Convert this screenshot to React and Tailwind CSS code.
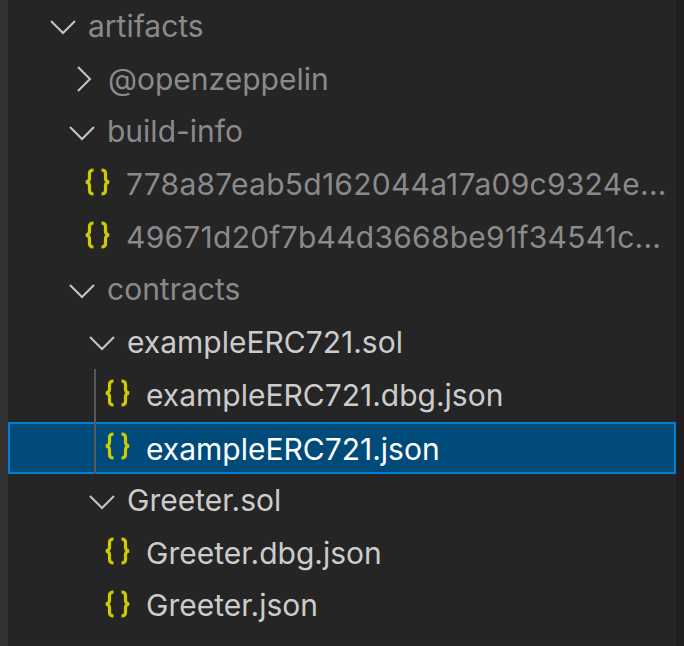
const Chevron = ({ open }) => (
  <svg width="32" height="32" viewBox="0 0 32 32" fill="none" stroke="#c5c5c5" strokeWidth="2" className="shrink-0">
    {open ? <path d="M4 11l12 12 12-12" /> : <path d="M11 4l12 12-12 12" />}
  </svg>
);

const JsonIcon = () => (
  <svg width="28" height="28" viewBox="0 0 28 28" fill="none" stroke="#cccc00" strokeWidth="3.2" className="shrink-0 -translate-y-[2px]">
    <path d="M11.500 2c-3 0-4 1-4 3.500v5c0 2-1 3-3.500 3.500 2.500.5 3.500 1.500 3.500 3.500v5c0 2.500 1 3.500 4 3.500" />
    <path d="M19.500 2c3 0 4 1 4 3.500v5c0 2 1 3 3.500 3.500-2.500.5-3.500 1.500-3.500 3.500v5c0 2.500-1 3.500-4 3.500" />
  </svg>
);

const Row = ({ pad, label, kind, dim, selected }) => (
  <div
    className={`flex h-[52.7px] items-center whitespace-nowrap border-2 ${
      selected ? 'border-[#007fd4] bg-[#004b7a] text-white' : dim ? 'border-transparent text-[#8a8a8a]' : 'border-transparent text-[#cccccc]'
    }`}
    style={{ paddingLeft: pad }}
  >
    {kind === 'file' ? <JsonIcon /> : <Chevron open={kind === 'open'} />}
    <span className={`min-w-0 truncate ${kind === 'file' ? 'ml-[16px]' : 'ml-[9px]'} ${kind === 'file' && dim ? 'tracking-[0.25px]' : ''} ${selected ? 'translate-y-[2px]' : ''}`}>{label}</span>
  </div>
);

export default function App() {
  return (
    <div className="flex h-[646px] w-[684px] overflow-hidden bg-[#252526] font-['Inter','Liberation_Sans',sans-serif] text-[30px]">
      <div className="w-2 shrink-0 bg-[#333333]" />
      <div className="w-[668px] shrink-0">
        <Row pad={37} label="artifacts" kind="open" dim />
        <Row pad={57} label="@openzeppelin" kind="closed" dim />
        <Row pad={56} label="build-info" kind="open" dim />
        <Row pad={72} label="778a87eab5d162044a17a09c9324e..." kind="file" dim />
        <Row pad={72} label="49671d20f7b44d3668be91f34541c..." kind="file" dim />
        <Row pad={56} label="contracts" kind="open" dim />
        <Row pad={76} label="exampleERC721.sol" kind="open" />
        <div className="relative">
          <Row pad={92} label="exampleERC721.dbg.json" kind="file" />
          <Row pad={92} label="exampleERC721.json" kind="file" selected />
          <div className="absolute bottom-0 left-[86px] top-0 w-[2px] bg-[#585858]" />
        </div>
        <Row pad={76} label="Greeter.sol" kind="open" />
        <Row pad={92} label="Greeter.dbg.json" kind="file" />
        <Row pad={92} label="Greeter.json" kind="file" />
      </div>
      <div className="flex-1 bg-[#1e1e1e]" />
    </div>
  );
}
